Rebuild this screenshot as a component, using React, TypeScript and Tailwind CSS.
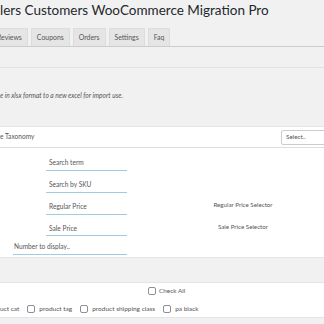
import React from "react";

const tabs = ["Reviews", "Coupons", "Orders", "Settings", "Faq"];
const inputs = [
  { ph: "Search term", side: "" },
  { ph: "Search by SKU", side: "" },
  { ph: "Regular Price", side: "Regular Price Selector" },
  { ph: "Sale Price", side: "Sale Price Selector" },
];
const taxes = ["uct cat", "product tag", "product shipping class", "pa black"];

const Box = () => <span className="inline-block w-[8px] h-[8px] border border-[#8c8f94] rounded-[2px] bg-white" />;

export default function App() {
  return (
    <div className="w-[324px] h-[324px] overflow-hidden bg-[#f1f1f1] text-[#555] font-['Lato',sans-serif]">
      {/* Title */}
      <h1 className="h-[27px] pt-[1px] text-[13.5px] leading-[18px] text-[#23282d] whitespace-nowrap">
        lers Customers WooCommerce Migration Pro
      </h1>
      {/* Tabs */}
      <div className="flex items-end gap-[3px] h-[20px] border-b border-[#ccc] ml-[-9px]">
        {tabs.map((t) => (
          <div
            key={t}
            className="h-[18px] px-[5px] flex items-center text-[6.9px] text-[#555] bg-[#e5e5e5] border border-b-0 border-[#ddd] whitespace-nowrap"
          >
            {t}
          </div>
        ))}
      </div>
      {/* Gray intro */}
      <div className="h-[20px]" />
      <div className="h-[59px] border-t border-[#e2e2e2] pt-[23px]">
        <p className="text-[6.6px] italic text-[#555] whitespace-nowrap">
          e in xlsx format to a new excel for import use.
        </p>
      </div>
      {/* White panel */}
      <div className="bg-white border-t border-[#e5e5e5] h-[131px]">
        <div className="flex items-center justify-between h-[21px] border-b border-[#ddd]">
          <span className="text-[6.6px] text-[#555] whitespace-nowrap">e Taxonomy</span>
          <div className="w-[50px] h-[15px] mr-[-7px] border border-[#ccc] rounded-[2px] flex items-center pl-[4px] text-[6.3px] text-[#555]">
            Select..
          </div>
        </div>
        <div className="pt-[5px]">
          {inputs.map((r) => (
            <div key={r.ph} className="flex items-center h-[21.7px]">
              <div className="ml-[46px] shrink-0 w-[81px] h-[15px] border-b border-[#9fcbe3] flex items-end pb-[2px] pl-[3px] text-[6.6px] text-[#555]">
                {r.ph}
              </div>
              <div className="shrink-0 w-[232px] text-center text-[6.2px] text-[#555] -mt-[5px]">
                {r.side}
              </div>
            </div>
          ))}
          <div className="ml-[13px] w-[114px] h-[16px] mt-[-1px] border-b border-[#9fcbe3] flex items-end pb-[2px] pl-[1px] text-[6.6px] text-[#555]">
            Number to display..
          </div>
        </div>
      </div>
      {/* Gray band */}
      <div className="h-[25px] border-t border-[#e5e5e5]" />
      {/* Checkboxes */}
      <div className="bg-white border-y border-[#e5e5e5] h-[36px]">
        <div className="flex items-center h-[14px] pt-[2px] pl-[148px] gap-[3px] text-[6.4px] text-[#555]">
          <Box />
          <span>Check All</span>
        </div>
        <div className="flex items-center h-[20px] pt-[4px] text-[6.5px] text-[#555] whitespace-nowrap">
          {taxes.map((t, i) => (
            <div key={t} className="flex items-center">
              {i > 0 && (
                <span className="ml-[8px] mr-[4px] flex items-center">
                  <Box />
                </span>
              )}
              <span>{t}</span>
            </div>
          ))}
        </div>
      </div>
    </div>
  );
}
